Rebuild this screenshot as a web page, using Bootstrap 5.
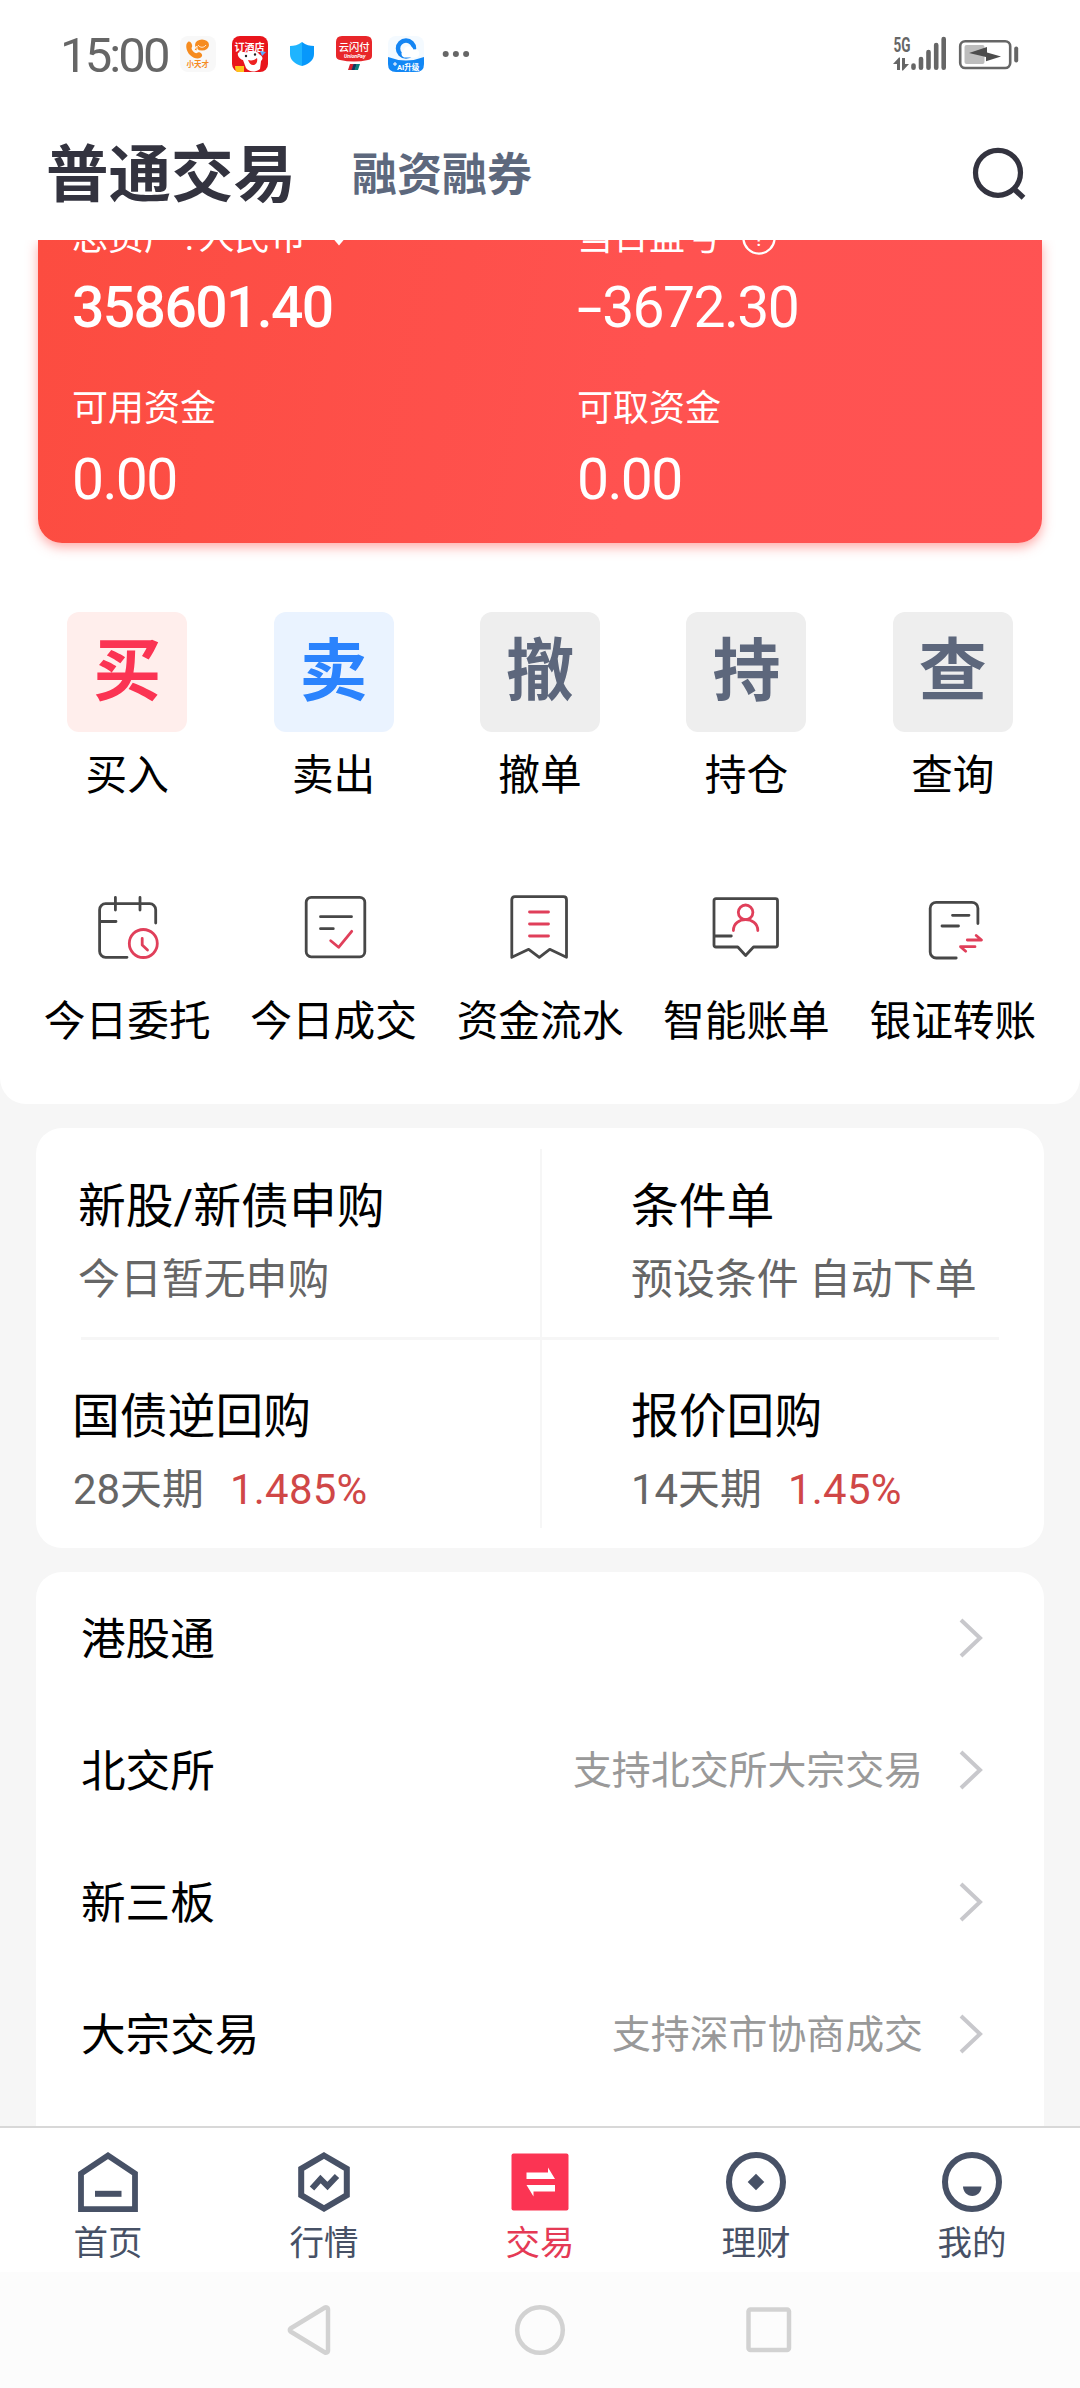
<!DOCTYPE html>
<html lang="zh-CN">
<head>
<meta charset="utf-8">
<meta name="viewport" content="width=device-width, initial-scale=1">
<title>普通交易</title>
<link href="https://cdn.jsdelivr.net/npm/bootstrap@5.3.0/dist/css/bootstrap.min.css" rel="stylesheet">
<style>
body{width:1080px;height:2388px;overflow:hidden;background:#f6f6f6;color:#000;font-family:Roboto,"Noto Sans CJK SC",sans-serif;line-height:1}
svg{display:block;flex:none;overflow:visible}
.white-sheet{height:1104px;border-radius:0 0 26px 26px}
.status{height:108px;padding:0 61px 0 60px;color:#666}
.status .clock{font-size:49px;line-height:49px;width:120px;letter-spacing:-2.9px;margin-top:2px}
.status .apps{gap:16px}
.titlebar{height:132px;padding:0 52px 0 46px}
.titlebar .on{font-size:62.5px;line-height:72px;font-weight:700;color:#33333f;margin-top:3px}
.titlebar .off{font-size:45px;line-height:60px;font-weight:700;color:#5d687d;margin:4px 0 0 56px}
.asset-clip{height:325px;overflow:hidden;padding:0 38px}
.asset{height:303px;border-radius:0 0 24px 24px;background:linear-gradient(100deg,#fc4c40,#ff5250 60%,#ff5353);box-shadow:0 4px 12px rgba(255,83,80,.5);color:#fff;padding:0 35px 0 34px}
.asset .half{width:505px}
.asset .cap{font-size:36px;line-height:40px;height:40px;white-space:pre}
.asset .cap.cut{margin-top:-22px;word-spacing:-4px}
.asset .num{font-size:57px;line-height:60px;letter-spacing:-1.6px;margin-top:20px}
.asset .minus{display:inline-block;transform:scaleX(1.6);transform-origin:left;margin-right:11px}
.asset .cap.lower{margin-top:51px}
.asset .cap.lower+.num{margin-top:21px}
.tiles{padding:0 24px;margin-top:47px}
.tile{width:120px;height:120px;border-radius:12px;font-size:68px;font-weight:700;background:#eee;color:#5d677c}
.tile.buy{background:#ffeeec;color:#fb3453}
.tile.sell{background:#eaf3ff;color:#2b83fd}
.lbl{font-size:41.7px;line-height:48px;white-space:nowrap}
.tiles .lbl{margin-top:20px}
.tools{padding:0 24px;margin-top:95px}
.tools .lbl{margin-top:37px}
.tools svg{fill:none;stroke:#474747;stroke-width:2.8;stroke-linecap:round;stroke-linejoin:round}
.tools .r{stroke:#e03f5a}
.panel{width:1008px;margin:24px auto 0;background:#fff;border-radius:26px}
.quad{height:420px;padding:21px 45px}
.quad .line{height:188px}
.quad .line.top{border-bottom:3px solid #f6f6f6;height:191px}
.quad .cell-l{width:461px;border-right:2px solid #f6f6f6}
.quad .cell-r{padding-left:92px}
.quad h2{font-size:47.8px;line-height:56px;font-weight:400;margin:0 0 0 -3px;white-space:nowrap}
.quad p{font-size:41.9px;line-height:48px;margin:21px 0 0 -3px;color:#666;white-space:nowrap}
.quad .top h2{padding-top:30px}
.quad .low h2{padding-top:49px}
.quad .low .cell-l>*{margin-left:-8px}
.quad .low .cell-l h2{margin-left:-9px}
.rate{color:#d04747;margin-left:26px;letter-spacing:.3px}
.links{height:600px;border-radius:26px 26px 0 0}
.links .list-group-item{height:132px;border:0;padding:0 60px 0 45px;background:none;color:#000;font-size:44.6px}
.links .item-name{padding-top:5px}
.links .note{font-size:38.9px;color:#999;margin-right:35px;padding-top:3px}
.tabs{height:146px;border-top:2px solid #d8d8d8;background:#fff;color:#475166;padding-top:24px}
.tabs .on{color:#e53a55}
.tabs span{font-size:34.5px;line-height:40px;margin-top:11px}
.sys{height:116px;background:#fcfcfc}
.sys svg{fill:none;stroke:#d2d2d2;stroke-width:4.5}
.bottom-dock{z-index:2}
</style>
<script src="https://cdn.jsdelivr.net/npm/bootstrap@5.3.0/dist/js/bootstrap.bundle.min.js"></script>
</head>
<body>
<div class="white-sheet bg-white">
  <header class="status d-flex align-items-center">
    <div class="clock">15:00</div>
    <div class="apps d-flex align-items-center">
      <svg width="36" height="36" viewBox="0 0 36 36"><rect width="36" height="36" rx="8" fill="#f8f8f8"/><path d="M8 6c2-2 5 3 4 5-2 2 3 7 5 6 2-2 6 1 5 3-1 3-7 4-12-1C6 15 5 8 8 6z" fill="#f68b1f"/><ellipse cx="22" cy="9" rx="7" ry="5.500" fill="#f68b1f"/><path d="M17 15l-3-1 3-4zM18 9c2 3 6 3 8 0" fill="#f68b1f" stroke="#fff" stroke-width=".8"/><text x="6.500" y="31" font-size="7.500" font-weight="700" fill="#f68b1f">小天才</text></svg>
      <svg width="36" height="36" viewBox="0 0 36 36"><rect width="36" height="36" rx="8" fill="#e9151c"/><text x="2.500" y="15" font-size="10" font-weight="700" fill="#fff">订酒店</text><path d="M6 17c3-3 6 0 10-1 5-2 9-1 11 2 3 2 5 4 2 7l-1 8c-5 4-11 3-14-1l-3-8c-3-1-6-4-5-7z" fill="#fff"/><path d="M16 24c4 1 7 0 9-2 1 4-1 7-4 7-2 0-4-2-5-5z" fill="#e22"/><circle cx="14" cy="20" r="1.200" fill="#222"/><circle cx="23" cy="18.500" r="1.200" fill="#222"/><path d="M3 30h9v6H6c-2 0-3-2-3-6z" fill="#ffc21a"/><path d="M28 15l6 1-4 4z" fill="#58a9ff"/></svg>
      <svg width="36" height="36" viewBox="0 0 36 36"><path d="M18 6c4 3 8 4 12 4v8c0 6-5 10-12 12z" fill="#0798fb"/><path d="M18 6c-4 3-8 4-12 4v8c0 6 5 10 12 12z" fill="#1fb4ff"/></svg>
      <svg width="36" height="36" viewBox="0 0 36 36"><path d="M6 0h24q6 0 6 6v14q0 3-4 4-14 3-28 0-4-1-4-4V6q0-6 6-6z" fill="#e8262a"/><text x="2.700" y="14.500" font-size="10.300" font-weight="500" fill="#fff">云闪付</text><text x="8" y="21.500" font-size="5.200" font-style="italic" font-weight="700" fill="#fff">UnionPay</text><path d="M14 28h4l-2 6h-4z" fill="#d7222d"/><path d="M17.500 28h3.500l-2 6h-3.500z" fill="#16365f"/><path d="M20.500 28H24l-2 6h-3.500z" fill="#0a7f7c"/></svg>
      <svg width="36" height="36" viewBox="0 0 36 36"><rect width="36" height="36" rx="8" fill="#f4faff"/><circle cx="18" cy="12.500" r="8" fill="none" stroke="#1485f3" stroke-width="4.500"/><path d="M16 21.500a4 4 0 010-7.500 5 5 0 019.500-.5 4.200 4.200 0 013 8z" fill="#fff"/><path d="M0 21q18 7 36 0v7q0 8-8 8H8q-8 0-8-8z" fill="#1287f5"/><text x="9" y="34" font-size="7.500" font-weight="700" fill="#fff">AI升级</text><path d="M7 26v4M5 28h4" stroke="#fff" stroke-width="1"/></svg>
      <svg width="36" height="36" viewBox="0 0 36 36"><g fill="#666"><circle cx="5.700" cy="18" r="3"/><circle cx="15.900" cy="18" r="3"/><circle cx="26.100" cy="18" r="3"/></g></svg>
    </div>
    <svg class="ms-auto" width="126" height="36" viewBox="894 36 126 36"><text x="894.500" y="51.500" font-size="20" font-weight="700" textLength="17" lengthAdjust="spacingAndGlyphs" fill="#666">5G</text><path d="M894 64l6-6.500h1V70h-3v-6zM903 58h3v6h4l-6 6.500h-1z" fill="#666"/><path d="M914.500 65.500v2.300M922 59v8.800M929.500 52v15.800M937.200 45v22.800M944.700 39v28.800" stroke="#666" stroke-width="4.600" stroke-linecap="round"/><rect x="961.200" y="41.200" width="50" height="26.800" rx="5" fill="none" stroke="#666" stroke-width="2.600"/><rect x="965.500" y="45" width="20" height="19" rx="2" fill="#bdbdbd"/><path d="M970 53l18-6v5.500l14 4-15 4.800V57z" fill="#4c4c4c"/><path d="M1017.200 48.500v12" stroke="#666" stroke-width="4" stroke-linecap="round"/></svg>
  </header>
  <nav class="titlebar d-flex align-items-center">
    <span class="on">普通交易</span><span class="off">融资融券</span>
    <svg class="ms-auto" width="56" height="56" viewBox="972 145 56 56" fill="none" stroke="#33333f" stroke-width="5.200"><circle cx="998" cy="171.800" r="22.500"/><path d="M1013 187l10.500 9.800" stroke-width="5.500"/></svg>
  </nav>
  <div class="asset-clip">
    <div class="asset d-flex">
      <div class="half"><div class="cap cut d-flex">总资产 : 人民币<svg class="ms-4" width="16" height="40" viewBox="0 0 16 40"><path d="M0 18h16l-8 9.500z" fill="#fff"/></svg></div><div class="num fw-medium">358601.40</div><div class="cap lower">可用资金</div><div class="num">0.00</div></div>
      <div><div class="cap cut d-flex">当日盈亏<svg class="ms-3 ps-1" width="40" height="40" viewBox="0 0 40 40"><circle cx="20" cy="20" r="17.300" fill="none" stroke="#fff" stroke-width="2.500"/><text x="20" y="29" text-anchor="middle" font-size="25" fill="#fff">?</text></svg></div><div class="num"><span class="minus">-</span>3672.30</div><div class="cap lower">可取资金</div><div class="num">0.00</div></div>
    </div>
  </div>
  <div class="tiles row g-0 text-center">
    <div class="col d-flex flex-column align-items-center"><div class="tile buy d-flex align-items-center justify-content-center">买</div><div class="lbl">买入</div></div>
    <div class="col d-flex flex-column align-items-center"><div class="tile sell d-flex align-items-center justify-content-center">卖</div><div class="lbl">卖出</div></div>
    <div class="col d-flex flex-column align-items-center"><div class="tile d-flex align-items-center justify-content-center">撤</div><div class="lbl">撤单</div></div>
    <div class="col d-flex flex-column align-items-center"><div class="tile d-flex align-items-center justify-content-center">持</div><div class="lbl">持仓</div></div>
    <div class="col d-flex flex-column align-items-center"><div class="tile d-flex align-items-center justify-content-center">查</div><div class="lbl">查询</div></div>
  </div>
  <div class="tools row g-0 text-center">
    <div class="col d-flex flex-column align-items-center"><svg width="66" height="66" viewBox="0 0 66 66"><path d="M33 62.300H11.600a6 6 0 01-6-6V14.700a6 6 0 016-6h44.100a6 6 0 016 6V28M5.600 26.500h16.400M21.400 2.500v12.500M46 2.500v12.500"/><g class="r"><circle cx="49.300" cy="48.500" r="14"/><path d="M48.200 43.500v6.500l5.300 5"/></g></svg><div class="lbl">今日委托</div></div>
    <div class="col d-flex flex-column align-items-center"><svg width="66" height="66" viewBox="0 0 66 66"><rect x="5.200" y="2.300" width="58.600" height="59.500" rx="5"/><path d="M19.500 21.700h31M19.500 33.700h12.800"/><path class="r" d="M29.700 45.700l7.900 6.600 13.100-16"/></svg><div class="lbl">今日成交</div></div>
    <div class="col d-flex flex-column align-items-center"><svg width="66" height="66" viewBox="0 0 66 66"><path d="M4.800 62.300V4.700q0-3 3-3h48.700q3 0 3 3v57.600l-16.800-8-10.400 8-10.600-8z"/><path class="r" d="M22.500 17h19M22.500 29h19M22.500 41h19"/></svg><div class="lbl">资金流水</div></div>
    <div class="col d-flex flex-column align-items-center"><svg width="66" height="66" viewBox="0 0 66 66"><path d="M3 3.700h59.500q2 0 2 2V50q0 2-2 2H40.500l-7.900 8.500L24.800 52H3q-2 0-2-2V5.700q0-2 2-2zM1 41h17.300"/><g class="r"><circle cx="32.600" cy="17.300" r="7.300"/><path d="M20.400 35.500c0-14.500 24.400-14.500 24.400 0"/></g></svg><div class="lbl">智能账单</div></div>
    <div class="col d-flex flex-column align-items-center"><svg width="66" height="66" viewBox="0 0 66 66"><path d="M36.200 63H16.200a6 6 0 01-6-6V13.300a6 6 0 016-6h35.700a6 6 0 016 6V28.500M32.500 20.300H49M22 31h16.500"/><path class="r" d="M47.300 45h14.200l-5.300-4.500M55 51.700H40.500l5.200 4.500"/></svg><div class="lbl">银证转账</div></div>
  </div>
</div>

<section class="panel quad">
  <div class="line top d-flex">
    <div class="cell-l"><h2>新股/新债申购</h2><p>今日暂无申购</p></div>
    <div class="cell-r"><h2>条件单</h2><p>预设条件 自动下单</p></div>
  </div>
  <div class="line low d-flex">
    <div class="cell-l"><h2>国债逆回购</h2><p>28天期<span class="rate">1.485%</span></p></div>
    <div class="cell-r"><h2>报价回购</h2><p>14天期<span class="rate">1.45%</span></p></div>
  </div>
</section>

<section class="panel links">
  <div class="list-group list-group-flush">
    <a class="list-group-item d-flex align-items-center"><span class="item-name">港股通</span><svg class="ms-auto" width="26" height="42" viewBox="0 0 26 42"><path d="M3 3l19 18L3 39" fill="none" stroke="#c8c8cc" stroke-width="4"/></svg></a>
    <a class="list-group-item d-flex align-items-center"><span class="item-name">北交所</span><span class="note ms-auto">支持北交所大宗交易</span><svg width="26" height="42" viewBox="0 0 26 42"><path d="M3 3l19 18L3 39" fill="none" stroke="#c8c8cc" stroke-width="4"/></svg></a>
    <a class="list-group-item d-flex align-items-center"><span class="item-name">新三板</span><svg class="ms-auto" width="26" height="42" viewBox="0 0 26 42"><path d="M3 3l19 18L3 39" fill="none" stroke="#c8c8cc" stroke-width="4"/></svg></a>
    <a class="list-group-item d-flex align-items-center"><span class="item-name">大宗交易</span><span class="note ms-auto">支持深市协商成交</span><svg width="26" height="42" viewBox="0 0 26 42"><path d="M3 3l19 18L3 39" fill="none" stroke="#c8c8cc" stroke-width="4"/></svg></a>
  </div>
</section>

<footer class="bottom-dock fixed-bottom">
  <nav class="tabs row g-0">
    <div class="col d-flex flex-column align-items-center"><svg width="60" height="60" viewBox="0 0 60 60" fill="none" stroke="#475166"><path d="M3 57.200V21.500L30 3.500l27 18v35.700z" stroke-width="5.800"/><path d="M17 41.800h26.500" stroke-width="6"/></svg><span>首页</span></div>
    <div class="col d-flex flex-column align-items-center"><svg width="60" height="60" viewBox="0 0 60 60" fill="none" stroke="#475166"><path d="M30 3.500l22.800 13.300v26.400L30 56.500 7.200 43.200V16.800z" stroke-width="6"/><path d="M18 36.500l8.500-9.500 7 7 9.500-10" stroke-width="6"/></svg><span>行情</span></div>
    <div class="col d-flex flex-column align-items-center on"><svg width="60" height="60" viewBox="0 0 60 60"><rect x="1.500" y="1.500" width="57" height="57" rx="2" fill="#fb3453"/><path d="M16.500 20.500h21.500v-5l7 11.500H16.500zM45 39.500H23.500v5L16.500 33H45z" fill="#fff"/></svg><span>交易</span></div>
    <div class="col d-flex flex-column align-items-center"><svg width="60" height="60" viewBox="0 0 60 60"><circle cx="30" cy="30" r="27" fill="none" stroke="#475166" stroke-width="6"/><path d="M30 21.700l8.300 8.300-8.300 8.300-8.300-8.300z" fill="#475166"/></svg><span>理财</span></div>
    <div class="col d-flex flex-column align-items-center"><svg width="60" height="60" viewBox="0 0 60 60"><circle cx="30" cy="30" r="27" fill="none" stroke="#475166" stroke-width="6"/><path d="M21 34.500h18.500c0 5-4 9.500-9.200 9.500S21 39.500 21 34.500z" fill="#475166"/></svg><span>我的</span></div>
  </nav>
  <div class="sys"><svg width="1080" height="116" viewBox="0 2272 1080 116"><path d="M325 2307.500a2 2 0 013 1.500v42a2 2 0 01-3 1.500l-34.500-21a2 2 0 010-3z" stroke-linejoin="round"/><circle cx="540" cy="2330" r="22.800"/><rect x="748.500" y="2309.500" width="40.500" height="40.500" rx="2"/></svg></div>
</footer>
</body>
</html>
